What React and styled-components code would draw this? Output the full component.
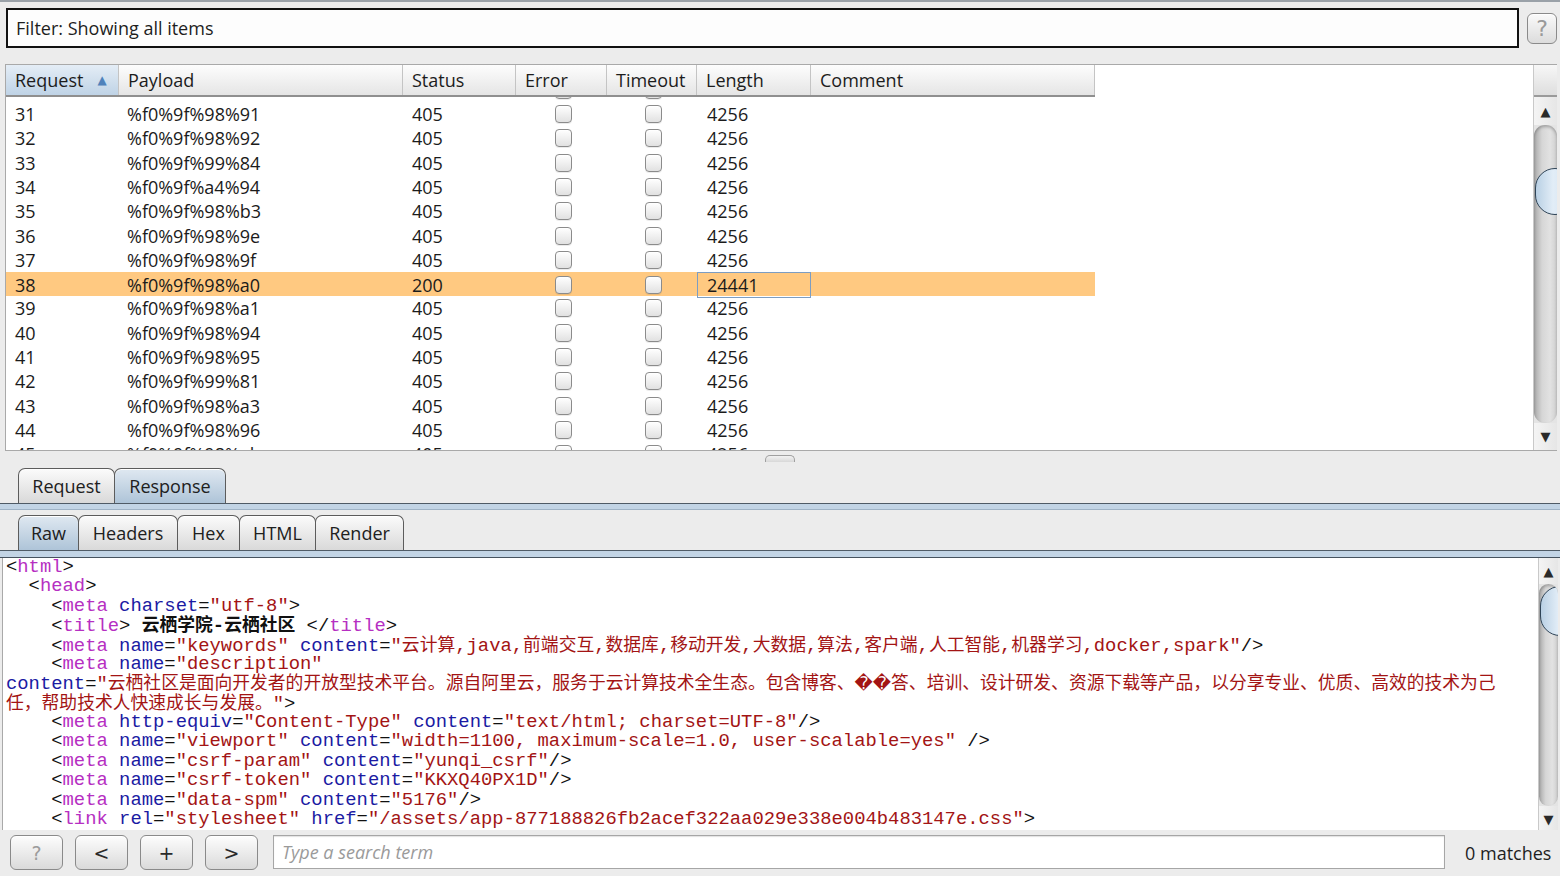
import React from 'react';
import styled, { createGlobalStyle } from 'styled-components';

const Global = createGlobalStyle`
  html, body { margin: 0; padding: 0; }
  body {
    background: #ececec;
    width: 1560px;
    height: 876px;
    overflow: hidden;
    font-family: "Open Sans", "Noto Sans", sans-serif;
    color: #1c1c1c;
  }
  * { box-sizing: border-box; }
`;

const Page = styled.div`
  width: 1560px;
  height: 876px;
  display: flex;
  flex-direction: column;
  background: #ececec;
  border-top: 2px solid #9aa1a8;
`;

/* ---------- filter bar ---------- */
const FilterRow = styled.div`
  display: flex;
  align-items: center;
  gap: 8px;
  padding: 6px 0 0 6px;
  height: 46px;
`;

const FilterBox = styled.div`
  width: 1513px;
  height: 40px;
  border: 2px solid #111;
  background: #fdfdfd;
  display: flex;
  align-items: center;
  padding-left: 8px;
  font-size: 18px;
  color: #1e1e1e;
`;

const HelpButton = styled.div`
  width: 30px;
  height: 31px;
  border: 1px solid #8a8a8a;
  border-radius: 6px;
  background: linear-gradient(#fafafa, #dcdcdc);
  box-shadow: inset 0 1px 0 #fff;
  display: flex;
  align-items: center;
  justify-content: center;
  font-size: 22px;
  color: #9a9a9a;
  font-family: "DejaVu Sans", sans-serif;
`;

/* ---------- results table ---------- */
const TablePanel = styled.div`
  margin: 16px 0 0 5px;
  width: 1552px;
  height: 387px;
  border-top: 1px solid #a9a9a9;
  border-left: 1px solid #a9a9a9;
  border-bottom: 1px solid #a9a9a9;
  display: flex;
  background: #fff;
`;

const TableMain = styled.div`
  width: 1527px;
  display: flex;
  flex-direction: column;
  background: #fff;
`;

const cols = '113px 284px 113px 91px 90px 114px 284px';

const HeaderRow = styled.div`
  display: grid;
  grid-template-columns: ${cols};
  width: 1089px;
  height: 32px;
  border-bottom: 2px solid #8f8f8f;
  background: linear-gradient(#fdfdfd, #e5e5e5);
`;

const HeadCell = styled.div`
  display: flex;
  align-items: center;
  padding-left: 9px;
  font-size: 18px;
  color: #1c1c1c;
  border-right: 1px solid #c4c4c4;
  background: ${(p) => (p.$sorted ? 'linear-gradient(#e4edf6, #bfd3e6)' : 'transparent')};
  gap: 14px;
`;

const SortArrow = styled.span`
  font-size: 12px;
  color: #4f82bb;
  font-family: "DejaVu Sans", sans-serif;
`;

const TableBody = styled.div`
  flex: 1;
  overflow: hidden;
`;

const RowList = styled.div`
  margin-top: -19.4px;
`;

const Row = styled.div`
  display: grid;
  grid-template-columns: ${cols};
  width: 1089px;
  height: 24.3px;
  background: ${(p) => (p.$selected ? '#ffc981' : 'transparent')};
`;

const Cell = styled.div`
  display: flex;
  align-items: center;
  padding-left: ${(p) => p.$pad || 9}px;
  font-size: 18px;
  color: #1b1b1b;
  white-space: nowrap;
  border: ${(p) => (p.$focus ? '1.5px solid #7c9dc2' : 'none')};
`;

const CheckCell = styled.div`
  display: flex;
  align-items: center;
  justify-content: center;
  padding-left: ${(p) => p.$shift || 0}px;
`;

const Check = styled.div`
  width: 17px;
  height: 18px;
  border: 1px solid #8b8b8b;
  border-radius: 4px;
  background: linear-gradient(#ffffff, #e1e1e1);
  box-shadow: inset 0 1px 1px rgba(255, 255, 255, 0.9), 0 1px 0 rgba(0,0,0,0.08);
`;

/* ---------- scrollbars ---------- */
const VScroll = styled.div`
  width: ${(p) => p.$w || 24}px;
  display: flex;
  flex-direction: column;
  background: #e4e4e4;
  border-left: 1px solid #c9c9c9;
`;

const ScrollCorner = styled.div`
  height: 32px;
  background: linear-gradient(#f7f7f7, #dedede);
  border-bottom: 2px solid #9a9a9a;
`;

const ArrowBtn = styled.div`
  height: ${(p) => p.$h}px;
  display: flex;
  align-items: ${(p) => (p.$down ? 'flex-start' : 'center')};
  justify-content: center;
  padding-top: ${(p) => (p.$down ? 6 : 0)}px;
  background: linear-gradient(90deg, #f4f4f4, #e6e6e6);
  font-size: 13px;
  color: #2a2a2a;
  font-family: "DejaVu Sans", sans-serif;
`;

const Track = styled.div`
  flex: 1;
  border-radius: 11px;
  background: linear-gradient(90deg, #a9a9a9, #d6d6d6 35%, #e2e2e2 70%, #cfcfcf);
  box-shadow: inset 0 2px 3px rgba(0,0,0,0.25);
  overflow: hidden;
  display: flex;
  flex-direction: column;
`;

const Thumb = styled.div`
  margin-top: ${(p) => p.$top}px;
  margin-left: 1px;
  height: ${(p) => p.$h}px;
  width: 40px;
  border: 1.5px solid #2f4457;
  border-radius: 24px;
  background: linear-gradient(90deg, #b9d0e4, #e2edf7 45%, #cfe0ef);
`;

/* ---------- divider + tabs ---------- */
const Divider = styled.div`
  height: 17px;
  display: flex;
  justify-content: center;
  align-items: flex-start;
  padding-top: 4px;
`;

const Grip = styled.div`
  width: 30px;
  height: 7px;
  border: 1px solid #a0a0a0;
  border-bottom: none;
  border-radius: 5px 5px 0 0;
  background: linear-gradient(#f2f2f2, #d8d8d8);
`;

const TabStrip = styled.div`
  height: 35px;
  display: flex;
  align-items: flex-end;
  padding-left: 18px;
`;

const Tab = styled.div`
  width: ${(p) => p.$w}px;
  height: 35px;
  margin-right: -1px;
  border: 1px solid #5c5c5c;
  border-bottom: none;
  border-radius: 7px 7px 0 0;
  display: flex;
  align-items: center;
  justify-content: center;
  font-size: 18px;
  color: #202020;
  background: ${(p) =>
    p.$active ? 'linear-gradient(#dfe8f1, #aec4d8)' : 'linear-gradient(#fbfbfb, #d9d9d9)'};
  box-shadow: inset 0 1px 0 #fff;
`;

const Band = styled.div`
  height: ${(p) => p.$h}px;
  border-top: 1px solid #4f5b66;
  border-bottom: 1px solid ${(p) => (p.$dark ? '#45525e' : '#9fb3c6')};
  background: #c2d4e5;
`;

const Spacer = styled.div`
  height: ${(p) => p.$h}px;
`;

/* ---------- code view ---------- */
const CodePanel = styled.div`
  height: 272px;
  display: flex;
  margin-left: 2px;
`;

const Code = styled.div`
  width: 1536px;
  background: #fff;
  border-left: 1px solid #a9a9a9;
  padding: 0 0 0 3px;
  overflow: hidden;
  font-family: "Liberation Mono", "Noto Sans CJK SC", monospace;
  font-size: 18.85px;
  line-height: 19.38px;
  white-space: pre;
`;

const Line = styled.div`
  height: 19.38px;
`;

const Tok = styled.span`
  color: ${(p) =>
    ({ b: '#111', t: '#b62fc2', a: '#1b1ba3', v: '#a31414', x: '#111' }[p.$k])};
  font-weight: ${(p) => (p.$k === 'x' ? 700 : 400)};
`;

const Cjk = styled.span`
  font-family: "Noto Sans CJK SC", "DejaVu Sans", sans-serif;
  font-size: 17.8px;
  line-height: 14px;
`;

/* ---------- bottom search bar ---------- */
const BottomBar = styled.div`
  height: 46px;
  display: flex;
  align-items: flex-start;
  padding: 5px 0 0 10px;
  gap: 12px;
`;

const NavButton = styled.div`
  width: 53px;
  height: 35px;
  border: 1px solid #8a8a8a;
  border-radius: 6px;
  background: linear-gradient(#fdfdfd, #dadada);
  box-shadow: inset 0 1px 0 #fff;
  display: flex;
  align-items: center;
  justify-content: center;
  font-size: 19px;
  color: ${(p) => (p.$muted ? '#9c9c9c' : '#2a2a2a')};
  font-family: "DejaVu Sans", sans-serif;
`;

const SearchBox = styled.div`
  margin-left: 3px;
  width: 1172px;
  height: 34px;
  border: 1px solid #a6a6a6;
  box-shadow: inset 0 1px 1px rgba(0,0,0,0.12);
  background: #fff;
  display: flex;
  align-items: center;
  padding-left: 8px;
  font-size: 18px;
  font-style: italic;
  color: #9a9a9a;
`;

const Matches = styled.div`
  margin-left: 8px;
  height: 35px;
  display: flex;
  align-items: center;
  font-size: 18px;
  color: #1e1e1e;
`;

/* ---------- data ---------- */
const rows = [
  ['30', '', '', ''],
  ['31', '%f0%9f%98%91', '405', '4256'],
  ['32', '%f0%9f%98%92', '405', '4256'],
  ['33', '%f0%9f%99%84', '405', '4256'],
  ['34', '%f0%9f%a4%94', '405', '4256'],
  ['35', '%f0%9f%98%b3', '405', '4256'],
  ['36', '%f0%9f%98%9e', '405', '4256'],
  ['37', '%f0%9f%98%9f', '405', '4256'],
  ['38', '%f0%9f%98%a0', '200', '24441'],
  ['39', '%f0%9f%98%a1', '405', '4256'],
  ['40', '%f0%9f%98%94', '405', '4256'],
  ['41', '%f0%9f%98%95', '405', '4256'],
  ['42', '%f0%9f%99%81', '405', '4256'],
  ['43', '%f0%9f%98%a3', '405', '4256'],
  ['44', '%f0%9f%98%96', '405', '4256'],
  ['45', '%f0%9f%98%ab', '405', '4256'],
];

const codeLines = [
  '{b}<{t}html{b}>',
  '{b}  <{t}head{b}>',
  '{b}    <{t}meta{b} {a}charset{b}={v}"utf-8"{b}>',
  '{b}    <{t}title{b}> {x}云栖学院-云栖社区{b} </{t}title{b}>',
  '{b}    <{t}meta{b} {a}name{b}={v}"keywords"{b} {a}content{b}={v}"云计算,java,前端交互,数据库,移动开发,大数据,算法,客户端,人工智能,机器学习,docker,spark"{b}/>',
  '{b}    <{t}meta{b} {a}name{b}={v}"description"',
  '{a}content{b}={v}"云栖社区是面向开发者的开放型技术平台。源自阿里云，服务于云计算技术全生态。包含博客、\uFFFD\uFFFD答、培训、设计研发、资源下载等产品，以分享专业、优质、高效的技术为己',
  '{v}任，帮助技术人快速成长与发展。"{b}>',
  '{b}    <{t}meta{b} {a}http-equiv{b}={v}"Content-Type"{b} {a}content{b}={v}"text/html; charset=UTF-8"{b}/>',
  '{b}    <{t}meta{b} {a}name{b}={v}"viewport"{b} {a}content{b}={v}"width=1100, maximum-scale=1.0, user-scalable=yes"{b} />',
  '{b}    <{t}meta{b} {a}name{b}={v}"csrf-param"{b} {a}content{b}={v}"yunqi_csrf"{b}/>',
  '{b}    <{t}meta{b} {a}name{b}={v}"csrf-token"{b} {a}content{b}={v}"KKXQ40PX1D"{b}/>',
  '{b}    <{t}meta{b} {a}name{b}={v}"data-spm"{b} {a}content{b}={v}"5176"{b}/>',
  '{b}    <{t}link{b} {a}rel{b}={v}"stylesheet"{b} {a}href{b}={v}"/assets/app-877188826fb2acef322aa029e338e004b483147e.css"{b}>',
];

const cjkRe = /([\u2E80-\u9FFF\u3000-\u303F\uFF00-\uFFEF\uFFFD]+)/;

function renderText(text) {
  return text.split(cjkRe).map((part, i) =>
    i % 2 === 1 ? <Cjk key={i}>{part}</Cjk> : part
  );
}

function renderLine(src) {
  const parts = src.split(/\{(\w)\}/);
  const out = [];
  for (let i = 1; i < parts.length; i += 2) {
    out.push(
      <Tok key={i} $k={parts[i]}>
        {renderText(parts[i + 1])}
      </Tok>
    );
  }
  return out;
}

const headers = ['Payload', 'Status', 'Error', 'Timeout', 'Length', 'Comment'];

export default function App() {
  return (
    <>
      <Global />
      <Page>
        <FilterRow>
          <FilterBox>Filter: Showing all items</FilterBox>
          <HelpButton>?</HelpButton>
        </FilterRow>

        <TablePanel>
          <TableMain>
            <HeaderRow>
              <HeadCell $sorted>
                Request <SortArrow>▲</SortArrow>
              </HeadCell>
              {headers.map((h) => (
                <HeadCell key={h}>{h}</HeadCell>
              ))}
            </HeaderRow>
            <TableBody>
              <RowList>
                {rows.map(([n, p, s, l]) => {
                  const sel = n === '38';
                  const hidden = n === '30';
                  return (
                    <Row key={n} $selected={sel}>
                      <Cell>{hidden ? '' : n}</Cell>
                      <Cell $pad={8}>{p}</Cell>
                      <Cell>{s}</Cell>
                      <CheckCell $shift={3}>
                        <Check />
                      </CheckCell>
                      <CheckCell $shift={3}>
                        <Check />
                      </CheckCell>
                      <Cell $pad={sel ? 9 : 10} $focus={sel}>
                        {l}
                      </Cell>
                      <Cell />
                    </Row>
                  );
                })}
              </RowList>
            </TableBody>
          </TableMain>
          <VScroll>
            <ScrollCorner />
            <ArrowBtn $h={28}>▲</ArrowBtn>
            <Track>
              <Thumb $top={43} $h={47} />
            </Track>
            <ArrowBtn $h={27} $down>▼</ArrowBtn>
          </VScroll>
        </TablePanel>

        <Divider>
          <Grip />
        </Divider>

        <TabStrip>
          <Tab $w={97}>Request</Tab>
          <Tab $w={112} $active>
            Response
          </Tab>
        </TabStrip>
        <Band $h={7} />
        <Spacer $h={5} />
        <TabStrip>
          <Tab $w={61} $active>
            Raw
          </Tab>
          <Tab $w={100}>Headers</Tab>
          <Tab $w={63}>Hex</Tab>
          <Tab $w={77}>HTML</Tab>
          <Tab $w={89}>Render</Tab>
        </TabStrip>
        <Band $h={8} $dark />

        <CodePanel>
          <Code>
            {codeLines.map((l, i) => (
              <Line key={i}>{renderLine(l)}</Line>
            ))}
          </Code>
          <VScroll $w={20}>
            <ArrowBtn $h={26}>▲</ArrowBtn>
            <Track>
              <Thumb $top={2} $h={50} />
            </Track>
            <ArrowBtn $h={24} $down>▼</ArrowBtn>
          </VScroll>
        </CodePanel>

        <BottomBar>
          <NavButton $muted>?</NavButton>
          <NavButton>&lt;</NavButton>
          <NavButton>+</NavButton>
          <NavButton>&gt;</NavButton>
          <SearchBox>Type a search term</SearchBox>
          <Matches>0 matches</Matches>
        </BottomBar>
      </Page>
    </>
  );
}
